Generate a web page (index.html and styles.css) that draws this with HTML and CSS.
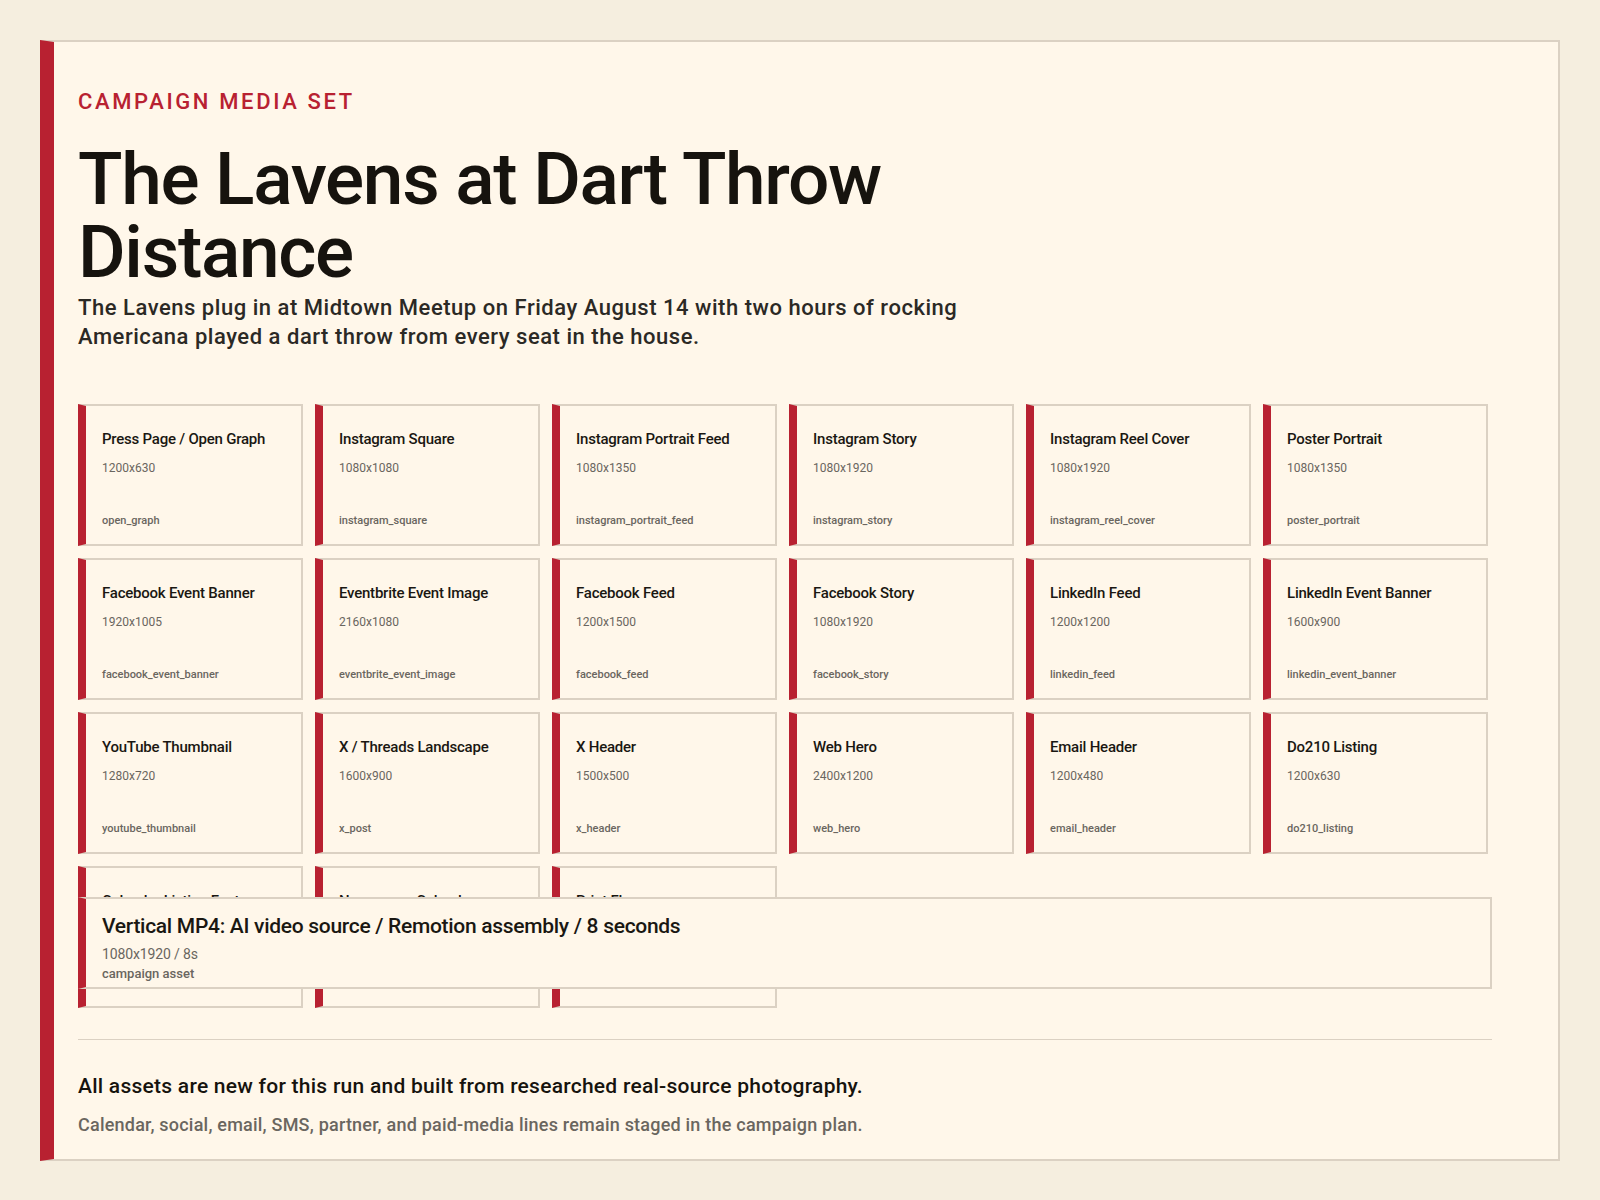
FILE: index.html
```html
<!DOCTYPE html>
<html lang="en">
<head>
<meta charset="utf-8">
<title>Campaign Media Set</title>
<link rel="stylesheet" href="styles.css">
</head>
<body>
<main class="sheet">
  <header class="intro">
    <p class="eyebrow">CAMPAIGN MEDIA SET</p>
    <h1 class="title">The Lavens at Dart Throw Distance</h1>
    <p class="lede">The Lavens plug in at Midtown Meetup on Friday August 14 with two hours of rocking Americana played a dart throw from every seat in the house.</p>
  </header>

  <section class="grid">
    <article class="card"><h2 class="card-title">Press Page / Open Graph</h2><p class="card-dims">1200x630</p><p class="card-slug">open_graph</p></article>
    <article class="card"><h2 class="card-title">Instagram Square</h2><p class="card-dims">1080x1080</p><p class="card-slug">instagram_square</p></article>
    <article class="card"><h2 class="card-title">Instagram Portrait Feed</h2><p class="card-dims">1080x1350</p><p class="card-slug">instagram_portrait_feed</p></article>
    <article class="card"><h2 class="card-title">Instagram Story</h2><p class="card-dims">1080x1920</p><p class="card-slug">instagram_story</p></article>
    <article class="card"><h2 class="card-title">Instagram Reel Cover</h2><p class="card-dims">1080x1920</p><p class="card-slug">instagram_reel_cover</p></article>
    <article class="card"><h2 class="card-title">Poster Portrait</h2><p class="card-dims">1080x1350</p><p class="card-slug">poster_portrait</p></article>

    <article class="card"><h2 class="card-title">Facebook Event Banner</h2><p class="card-dims">1920x1005</p><p class="card-slug">facebook_event_banner</p></article>
    <article class="card"><h2 class="card-title">Eventbrite Event Image</h2><p class="card-dims">2160x1080</p><p class="card-slug">eventbrite_event_image</p></article>
    <article class="card"><h2 class="card-title">Facebook Feed</h2><p class="card-dims">1200x1500</p><p class="card-slug">facebook_feed</p></article>
    <article class="card"><h2 class="card-title">Facebook Story</h2><p class="card-dims">1080x1920</p><p class="card-slug">facebook_story</p></article>
    <article class="card"><h2 class="card-title">LinkedIn Feed</h2><p class="card-dims">1200x1200</p><p class="card-slug">linkedin_feed</p></article>
    <article class="card"><h2 class="card-title">LinkedIn Event Banner</h2><p class="card-dims">1600x900</p><p class="card-slug">linkedin_event_banner</p></article>

    <article class="card"><h2 class="card-title">YouTube Thumbnail</h2><p class="card-dims">1280x720</p><p class="card-slug">youtube_thumbnail</p></article>
    <article class="card"><h2 class="card-title">X / Threads Landscape</h2><p class="card-dims">1600x900</p><p class="card-slug">x_post</p></article>
    <article class="card"><h2 class="card-title">X Header</h2><p class="card-dims">1500x500</p><p class="card-slug">x_header</p></article>
    <article class="card"><h2 class="card-title">Web Hero</h2><p class="card-dims">2400x1200</p><p class="card-slug">web_hero</p></article>
    <article class="card"><h2 class="card-title">Email Header</h2><p class="card-dims">1200x480</p><p class="card-slug">email_header</p></article>
    <article class="card"><h2 class="card-title">Do210 Listing</h2><p class="card-dims">1200x630</p><p class="card-slug">do210_listing</p></article>

    <article class="card"><h2 class="card-title">Calendar Listing Feature</h2><p class="card-dims">1200x900</p><p class="card-slug">calendar_listing_feature</p></article>
    <article class="card"><h2 class="card-title">Newspaper Calendar Upload</h2><p class="card-dims">1200x800</p><p class="card-slug">newspaper_calendar_upload</p></article>
    <article class="card"><h2 class="card-title">Print Flyer</h2><p class="card-dims">2550x3300</p><p class="card-slug">print_flyer</p></article>
  </section>

  <article class="video">
    <h2 class="video-title">Vertical MP4: AI video source / Remotion assembly / 8 seconds</h2>
    <p class="video-dims">1080x1920 / 8s</p>
    <p class="video-kind">campaign asset</p>
  </article>

  <footer class="notes">
    <p class="notes-lead">All assets are new for this run and built from researched real-source photography.</p>
    <p class="notes-sub">Calendar, social, email, SMS, partner, and paid-media lines remain staged in the campaign plan.</p>
  </footer>
</main>
</body>
</html>
```

FILE: styles.css
```css
* { box-sizing: border-box; }

html, body {
  margin: 0;
  padding: 0;
}

body {
  background: #f5eedf;
  padding: 40px;
  font-family: Roboto, "Liberation Sans", sans-serif;
  color: #17140f;
}

p, h1, h2 { margin: 0; }

.sheet {
  background: #fff7ea;
  border: 2px solid #dbd1c3;
  border-left: 14px solid #b82131;
  padding: 47px 66px 23px 24px;
}

.eyebrow {
  color: #b82131;
  font-size: 22px;
  line-height: 26.4px;
  font-weight: 500;
  letter-spacing: 0.12em;
}

.title {
  margin-top: 28px;
  max-width: 960px;
  font-size: 73px;
  line-height: 73px;
  font-weight: 500;
  letter-spacing: -0.018em;
  color: #16130e;
}

.lede {
  margin-top: 5px;
  max-width: 910px;
  font-size: 22px;
  line-height: 28.4px;
  font-weight: 500;
  color: #2b2925;
  letter-spacing: 0.024em;
}

.grid {
  margin-top: 53px;
  height: 481px;
  display: grid;
  grid-template-columns: repeat(6, 225px);
  grid-auto-rows: 142px;
  gap: 12px;
}

.card {
  display: flex;
  flex-direction: column;
  border: 2px solid #dbd1c3;
  border-left: 8px solid #b82131;
  padding: 24px 16px 16px;
  background: #fff7ea;
}

.card-title {
  font-size: 15px;
  line-height: 19.5px;
  font-weight: 500;
  color: #1a1712;
  letter-spacing: -0.015em;
}

.card-dims {
  margin-top: 11px;
  font-size: 12px;
  line-height: 15.6px;
  color: #6a665f;
}

.card-slug {
  margin-top: auto;
  font-size: 11px;
  line-height: 14.3px;
  font-weight: 500;
  color: #6a665f;
}

.video {
  position: relative;
  margin-top: 12px;
  background: #fff7ea;
  border: 2px solid #dbd1c3;
  border-left: 8px solid #b82131;
  padding: 13.5px 16px 4.5px;
}

.video-title {
  font-size: 21px;
  line-height: 26.25px;
  font-weight: 500;
  color: #1a1712;
  letter-spacing: -0.014em;
}

.video-dims {
  margin-top: 6.5px;
  font-size: 14px;
  line-height: 18.2px;
  color: #6a665f;
  letter-spacing: -0.01em;
}

.video-kind {
  margin-top: 2px;
  font-size: 13px;
  line-height: 16.9px;
  font-weight: 500;
  color: #6a665f;
}

.notes {
  margin-top: 50px;
  border-top: 1px solid #dbd1c3;
  padding-top: 33px;
}

.notes-lead {
  font-size: 21px;
  line-height: 27.3px;
  font-weight: 500;
  color: #16130e;
  letter-spacing: 0.012em;
}

.notes-sub {
  margin-top: 14px;
  font-size: 18px;
  line-height: 22.1px;
  font-weight: 500;
  color: #6a665f;
  letter-spacing: 0.012em;
}
```
